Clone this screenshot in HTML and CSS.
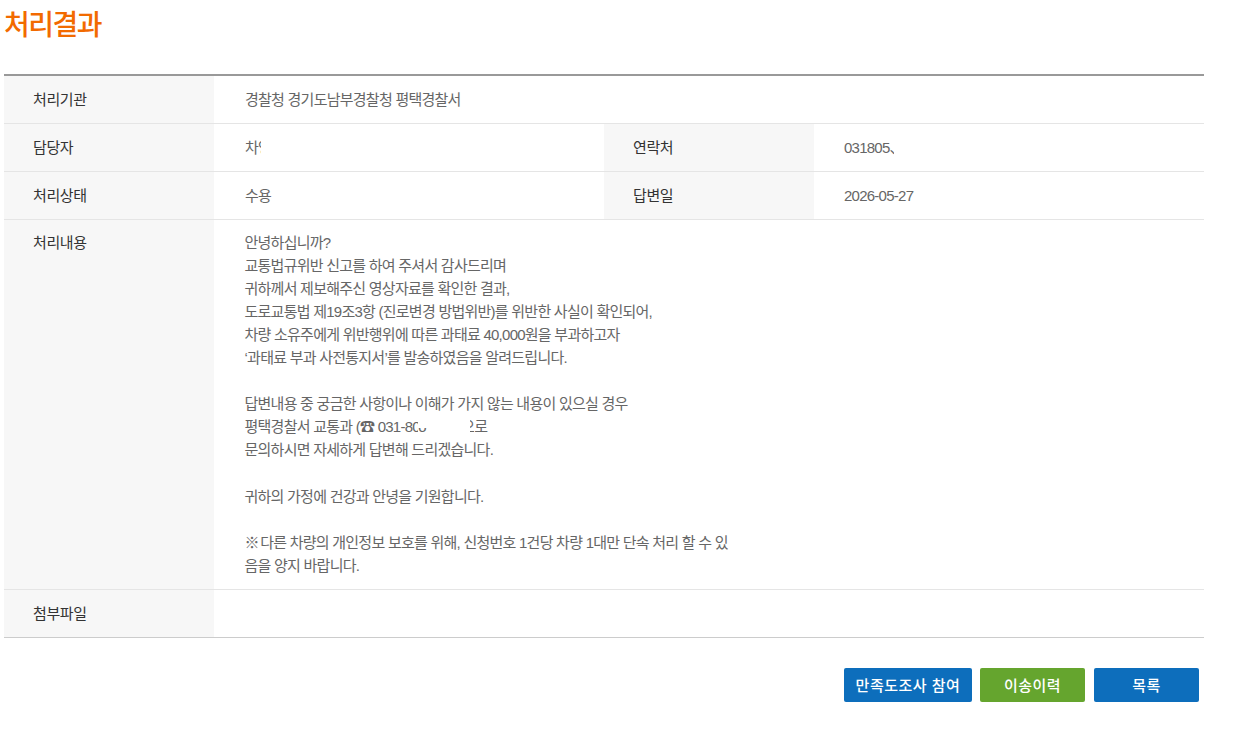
FILE: index.html
```html
<!DOCTYPE html>
<html lang="ko">
<head>
<meta charset="utf-8">
<title>처리결과</title>
<link rel="stylesheet" href="styles.css">
</head>
<body>
<main class="page">
  <h1 class="title">처리결과</h1>
  <section class="result">
    <div class="row">
      <div class="label">처리기관</div>
      <div class="value">경찰청 경기도남부경찰청 평택경찰서</div>
    </div>
    <div class="row two">
      <div class="label">담당자</div>
      <div class="value"><span class="clip name">차영</span></div>
      <div class="label">연락처</div>
      <div class="value alt">031805<span class="clip tail">、</span></div>
    </div>
    <div class="row two">
      <div class="label">처리상태</div>
      <div class="value">수용</div>
      <div class="label">답변일</div>
      <div class="value alt">2026-05-27</div>
    </div>
    <div class="row tall">
      <div class="label">처리내용</div>
      <div class="value body-text">
        <p>안녕하십니까?</p>
        <p>교통법규위반 신고를 하여 주셔서 감사드리며</p>
        <p>귀하께서 제보해주신 영상자료를 확인한 결과,</p>
        <p>도로교통법 제19조3항 (진로변경 방법위반)를 위반한 사실이 확인되어,</p>
        <p>차량 소유주에게 위반행위에 따른 과태료 40,000원을 부과하고자</p>
        <p>‘과태료 부과 사전통지서’를 발송하였음을 알려드립니다.</p>
        <p>&nbsp;</p>
        <p>답변내용 중 궁금한 사항이나 이해가 가지 않는 내용이 있으실 경우</p>
        <p>평택경찰서 교통과 (☎ 031-8<span class="clip digit">0</span><span class="dots">ᴗ</span><span class="gap"></span><span class="clip end">으</span>로</p>
        <p>문의하시면 자세하게 답변해 드리겠습니다.</p>
        <p>&nbsp;</p>
        <p>귀하의 가정에 건강과 안녕을 기원합니다.</p>
        <p>&nbsp;</p>
        <p class="note"><span class="mark">※</span> 다른 차량의 개인정보 보호를 위해, 신청번호 1건당 차량 1대만 단속 처리 할 수 있음을 양지 바랍니다.</p>
      </div>
    </div>
    <div class="row last">
      <div class="label">첨부파일</div>
      <div class="value"></div>
    </div>
  </section>
  <nav class="actions">
    <a class="btn blue survey">만족도조사 참여</a>
    <a class="btn green history">이송이력</a>
    <a class="btn blue list">목록</a>
  </nav>
</main>
</body>
</html>
```
FILE: styles.css
```css
* { box-sizing: border-box; }
html, body { margin: 0; padding: 0; background: #fff; }
body {
  font-family: "Liberation Sans", "Noto Sans CJK KR", sans-serif;
  font-size: 15px;
  color: #666;
  letter-spacing: -0.75px;
}
.page { width: 1236px; height: 732px; padding: 0 32px 0 4px; overflow: hidden; }
.title {
  margin: 0;
  height: 74px;
  padding-top: 3px;
  font-family: "Noto Sans CJK KR", sans-serif;
  font-size: 28px;
  line-height: 40px;
  font-weight: 500;
  color: #f26a00;
  letter-spacing: -1.5px;
}
.result { border-top: 2px solid #999; border-bottom: 1px solid #ccc; }
.row { display: grid; grid-template-columns: 210px 1fr; border-bottom: 1px solid #e5e5e5; min-height: 48px; }
.row.two { grid-template-columns: 210px 390px 210px 1fr; }
.row.last { border-bottom: 0; min-height: 47px; }
.label { background: #f7f7f7; padding: 14px 0 0 29px; color: #333; line-height: 20px; letter-spacing: -0.4px; }
.value { padding: 14px 0 0 31px; line-height: 20px; }
.value.alt { padding-left: 30px; }
.tall .label { padding-top: 13px; }
.body-text { padding: 10.5px 0 12px 30.5px; width: 521px; line-height: 23.1px; }
.body-text p { margin: 0; }
.clip { display: inline-block; overflow: hidden; vertical-align: bottom; white-space: nowrap; }
.name { width: 16px; }
.tail { width: 4px; }
.digit { width: 6px; }
.dots { display: inline-block; width: 14px; }
.gap { display: inline-block; width: 38px; }
.end { width: 4px; direction: rtl; }
.mark { margin-right: -2px; }
.actions { display: flex; justify-content: flex-end; gap: 8px; padding: 30px 5px 0 0; }
.btn {
  display: block;
  height: 34px;
  border-radius: 2px;
  text-align: center;
  color: #fff;
  font-family: "Noto Sans CJK KR", sans-serif;
  font-size: 15px;
  font-weight: 500;
  line-height: 33px;
  letter-spacing: 0.5px;
}
.blue { background: #0d6ebc; }
.green { background: #65a52e; }
.survey { width: 128px; }
.history { width: 105px; }
.list { width: 105px; margin-left: 1px; }
```
